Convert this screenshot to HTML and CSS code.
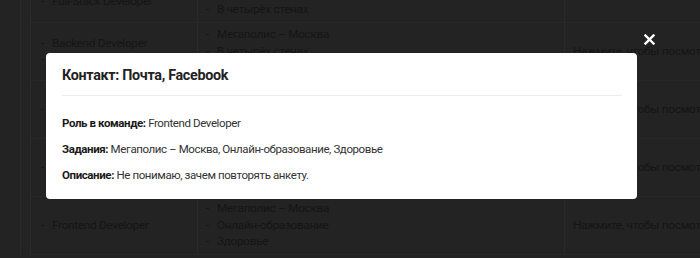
FILE: index.html
```html
<!DOCTYPE html>
<html lang="ru">
    <head>
        <meta charset="UTF-8">
        <meta name="viewport" content="width=device-width, initial-scale=1.0">
        <title>Анкеты</title>
        <link rel="stylesheet" href="styles.css">
    </head>

    <body>
        <div class="page">
            <table class="answers">
                <tr>
                    <td class="col-role">
                        <ul><li>Designer</li><li>Full-Stack Developer</li></ul>
                    </td>
                    <td class="col-tasks">
                        <ul><li>Мегаполис – Москва</li><li>Здоровье</li><li>В четырёх стенах</li></ul>
                    </td>
                    <td class="col-link">Нажмите, чтобы посмотреть</td>
                </tr>
                <tr>
                    <td class="col-role">
                        <ul><li>Backend Developer</li><li>Frontend Developer</li></ul>
                    </td>
                    <td class="col-tasks">
                        <ul><li>Мегаполис – Москва</li><li>В четырёх стенах</li><li>Здоровье</li></ul>
                    </td>
                    <td class="col-link">Нажмите, чтобы посмотреть</td>
                </tr>
                <tr>
                    <td class="col-role">
                        <ul><li>Frontend Developer</li></ul>
                    </td>
                    <td class="col-tasks">
                        <ul><li>Онлайн-образование</li></ul>
                    </td>
                    <td class="col-link">Нажмите, чтобы посмотреть</td>
                </tr>
                <tr>
                    <td class="col-role">
                        <ul><li>Frontend Developer</li></ul>
                    </td>
                    <td class="col-tasks">
                        <ul><li>Мегаполис – Москва</li><li>Онлайн-образование</li><li>Здоровье</li></ul>
                    </td>
                    <td class="col-link">Нажмите, чтобы посмотреть</td>
                </tr>
                <tr>
                    <td class="col-role">
                        <ul><li>Frontend Developer</li></ul>
                    </td>
                    <td class="col-tasks">
                        <ul><li>Мегаполис – Москва</li><li>Онлайн-образование</li><li>Здоровье</li></ul>
                    </td>
                    <td class="col-link">Нажмите, чтобы посмотреть</td>
                </tr>
            </table>
        </div>

        <!-- Modal -->
        <div class="overlay">
            <button class="close-button" aria-label="Закрыть">
                <svg width="11" height="11" viewBox="0 0 11 11">
                    <path d="M1.5 1.5 L9.5 9.5 M9.5 1.5 L1.5 9.5" stroke="#fff" stroke-width="2.4" stroke-linecap="square"/>
                </svg>
            </button>
            <div class="modal">
                <div class="modal-header">
                    <h3>Контакт: Почта, Facebook</h3>
                </div>
                <div class="modal-body">
                    <p><b>Роль в команде:</b> Frontend Developer</p>
                    <p><b>Задания:</b> Мегаполис – Москва, Онлайн-образование, Здоровье</p>
                    <p><b>Описание:</b> Не понимаю, зачем повторять анкету.</p>
                </div>
            </div>
        </div>
    </body>
</html>
```

FILE: styles.css
```css
* {
    box-sizing: border-box;
    margin: 0;
    padding: 0;
}
body {
    background-color: #232323;
    font-family: Roboto, "Liberation Sans", sans-serif;
    overflow: hidden;
}
.page {
    margin-top: -36px;
    margin-left: 20px;
    border-left: 1px solid #2a2a2a;
    padding-left: 9px;
    width: 680px;
    overflow: hidden;
}
.answers {
    border-collapse: collapse;
    table-layout: fixed;
    width: 800px;
    color: #151515;
    font-size: 11.8px;
    letter-spacing: -0.3px;
}
.answers td {
    height: 58px;
    vertical-align: middle;
    border-bottom: 1px solid #282828;
    border-left: 1px solid #2a2a2a;
    overflow: hidden;
}
.answers ul {
    list-style: none;
}
.answers li {
    line-height: 16.5px;
    white-space: nowrap;
}
.answers li::before {
    content: "-";
    display: inline-block;
    width: 11px;
}
.col-role {
    width: 167px;
    padding-left: 10px;
}
.col-tasks {
    width: 367px;
    padding-left: 8px;
}
.col-link {
    padding-left: 8px;
    white-space: nowrap;
}
.overlay {
    position: fixed;
    top: 0;
    left: 0;
    width: 100%;
    height: 100%;
    padding: 53px 0 0 46px;
}
.close-button {
    position: absolute;
    top: 34px;
    left: 644px;
    background: none;
    border: none;
    width: 11px;
    height: 11px;
    cursor: pointer;
}
.close-button svg {
    display: block;
}
.modal {
    width: 591px;
    background-color: #fff;
    border-radius: 4px;
    padding: 0 15px 15px 16px;
}
.modal-header {
    padding: 12px 0 10px;
    border-bottom: 1px solid #ececec;
}
.modal-header h3 {
    font-size: 14.3px;
    line-height: 20px;
    font-weight: 700;
    letter-spacing: -0.3px;
    color: #222;
}
.modal-body {
    padding-top: 18px;
}
.modal-body p {
    font-size: 11.5px;
    line-height: 18px;
    letter-spacing: -0.4px;
    color: #333;
    margin-bottom: 8px;
}
.modal-body p:last-child {
    margin-bottom: 0;
}
.modal-body b {
    font-weight: 700;
    color: #1a1a1a;
}
```
